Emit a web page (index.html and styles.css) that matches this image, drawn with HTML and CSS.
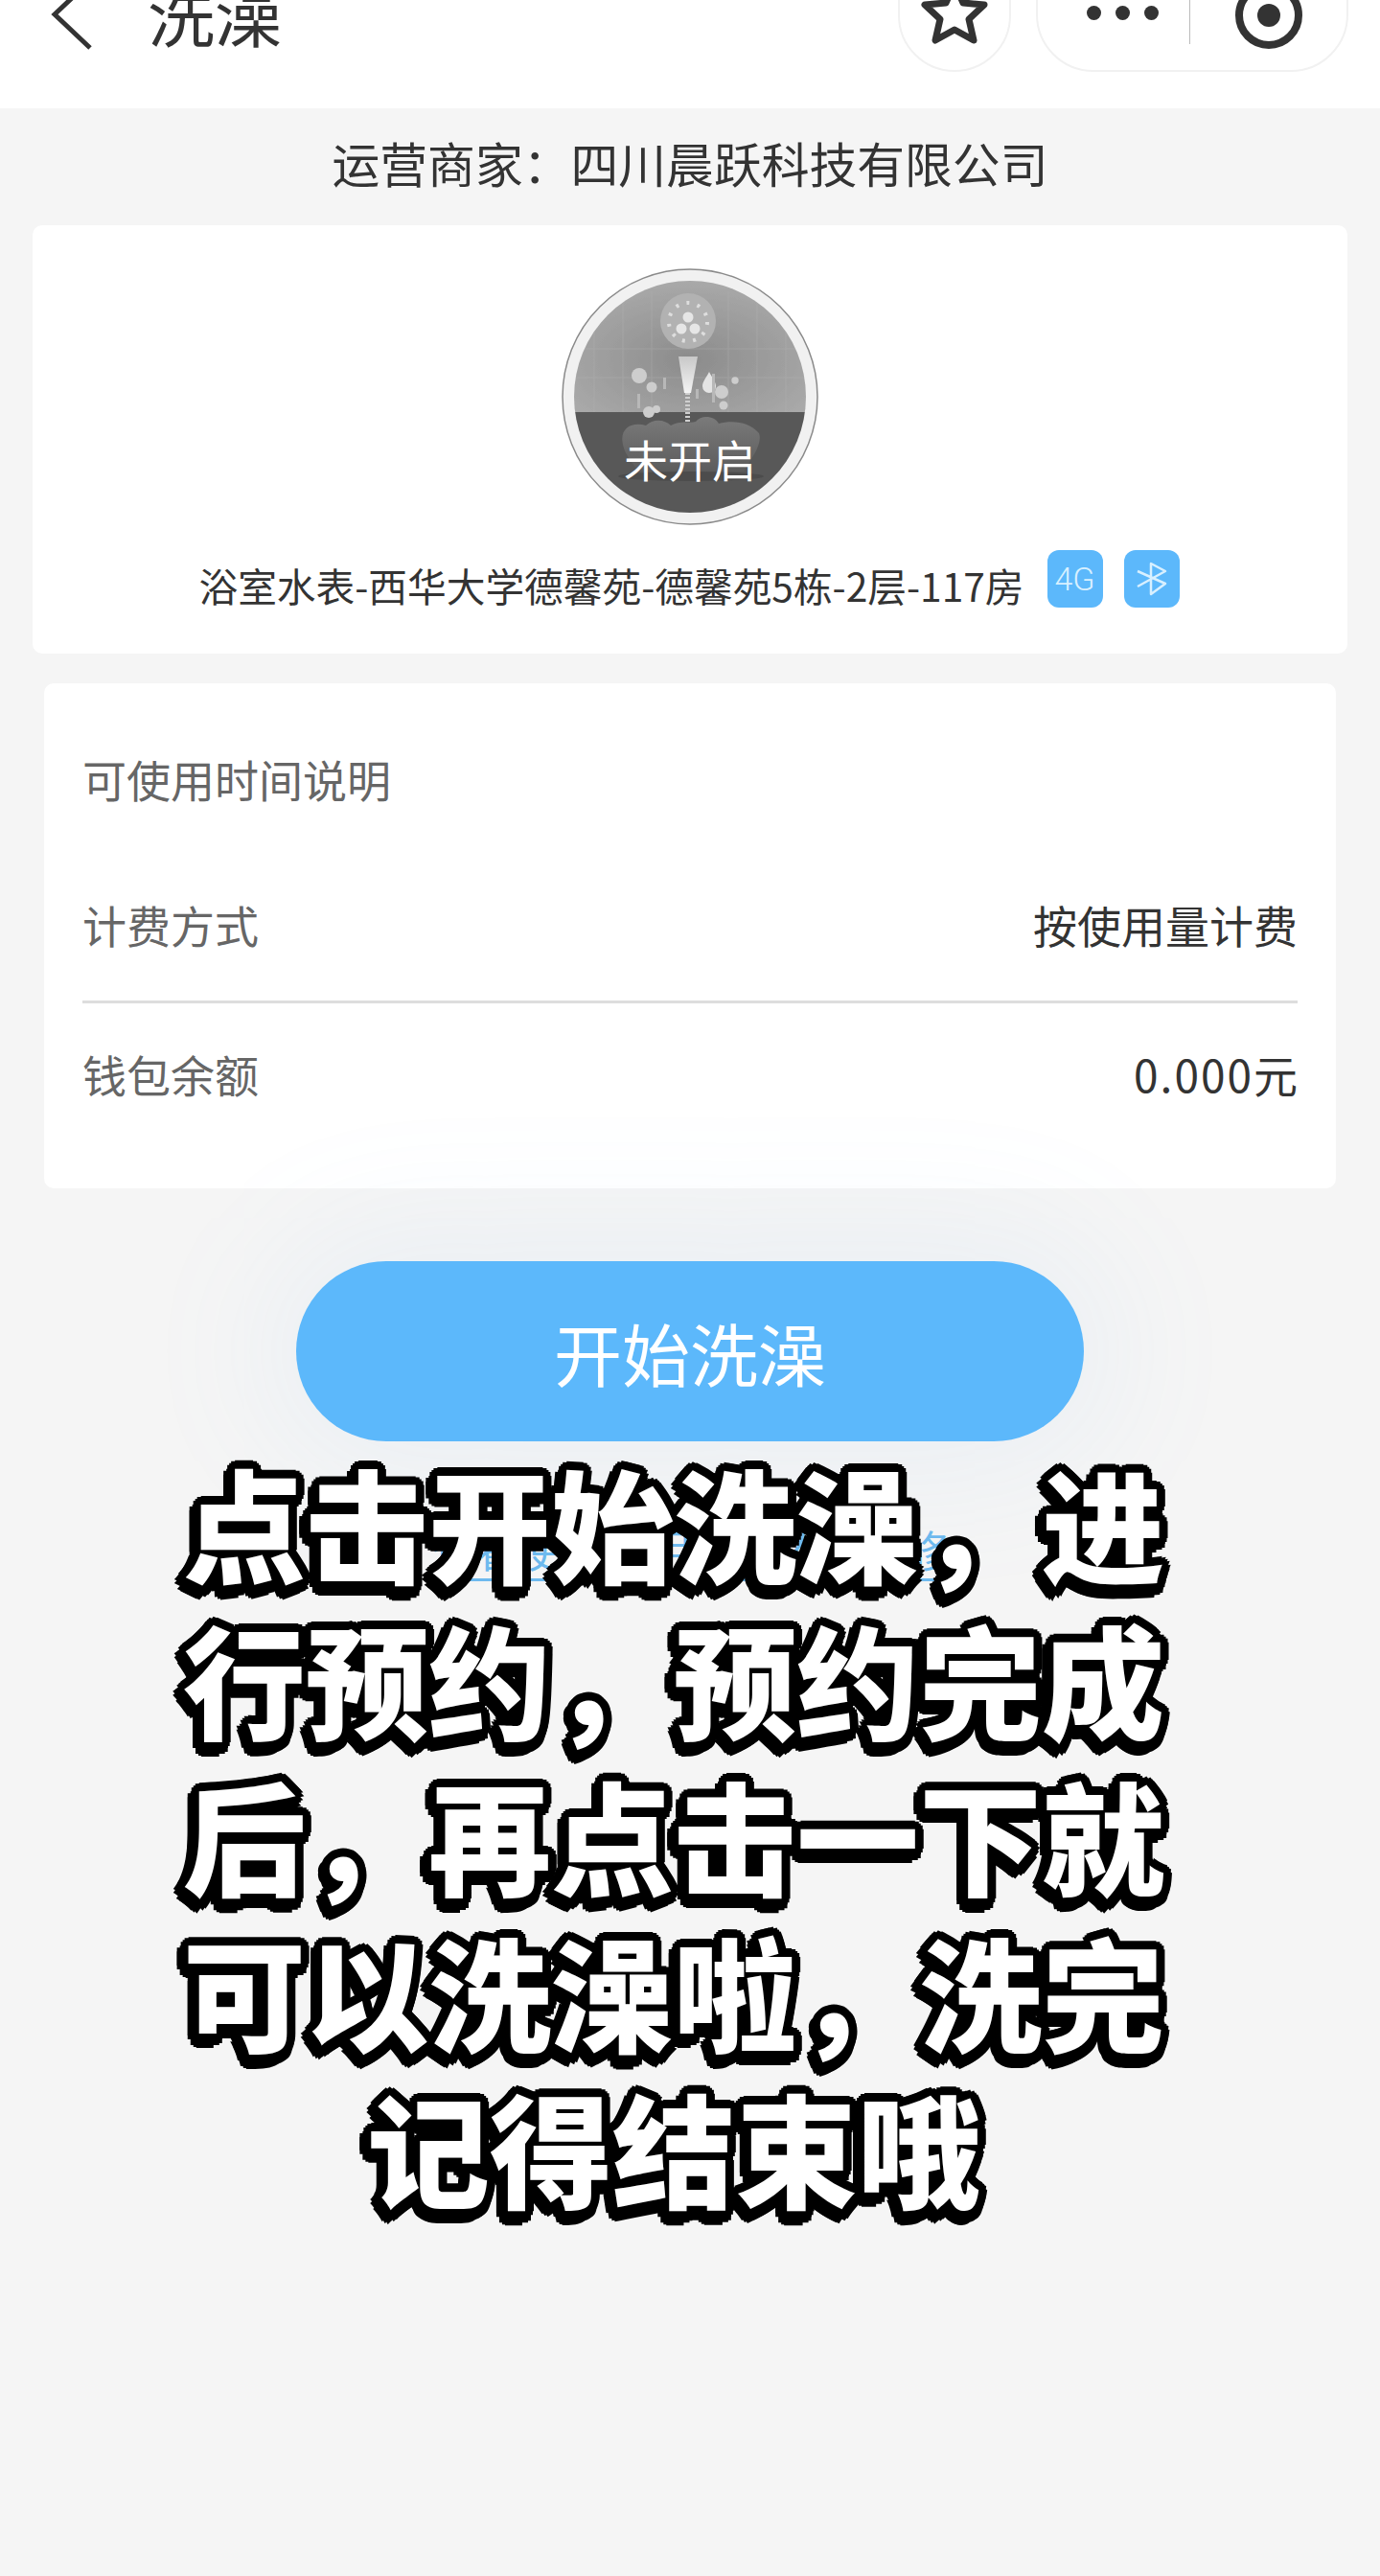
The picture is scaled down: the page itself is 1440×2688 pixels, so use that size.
FILE: index.html
```html
<!DOCTYPE html>
<html lang="zh">
<head>
  <meta charset="UTF-8">
  <meta name="viewport" content="width=device-width, initial-scale=1.0">
  <title>洗澡</title>
  <link rel="stylesheet" href="styles.css">
</head>
<body>
  <div class="page">
    <header class="navbar">
      <svg class="nav-back" width="44" height="76" viewBox="0 0 44 76">
        <path d="M41 3 L4 38 L41 73" fill="none" stroke="#333" stroke-width="5"/>
      </svg>
      <span class="nav-title">洗澡</span>
      <div class="capsule capsule-star">
        <svg width="70" height="70" viewBox="0 0 70 70">
          <path d="M35 4 L44 24 L66 26 L50 41 L55 63 L35 52 L15 63 L20 41 L4 26 L26 24 Z" fill="none" stroke="#333" stroke-width="7" stroke-linejoin="round"/>
        </svg>
      </div>
      <div class="capsule capsule-menu">
        <div class="dots"><i></i><i></i><i></i></div>
        <div class="capsule-line"></div>
        <div class="target"><i></i></div>
      </div>
    </header>

    <div class="merchant">运营商家：四川晨跃科技有限公司</div>

    <section class="card device">
      <div class="disc">
        <svg width="268" height="268" viewBox="-134 -134 268 268">
          <defs>
            <clipPath id="inner"><circle r="121"/></clipPath>
            <linearGradient id="handle" x1="0" y1="0" x2="0" y2="1">
              <stop offset="0" stop-color="#c8c8c8"/>
              <stop offset="1" stop-color="#f4f4f4"/>
            </linearGradient>
            <linearGradient id="foam" x1="0" y1="0" x2="0" y2="1">
              <stop offset="0" stop-color="#7a7a7a"/>
              <stop offset="1" stop-color="#5c5c5c"/>
            </linearGradient>
            <radialGradient id="sky" cx="0.5" cy="0.6" r="0.6">
              <stop offset="0" stop-color="#8c8c8c"/>
              <stop offset="1" stop-color="#a9a9a9"/>
            </radialGradient>
          </defs>
          <circle r="133" fill="#f1f1f1" stroke="#8a8a8a" stroke-width="1.5"/>
          <g clip-path="url(#inner)">
            <rect x="-121" y="-121" width="242" height="137" fill="url(#sky)"/>
            <path d="M-100 -80V16M-70 -100V16M-40 -110V16M40 -110V16M70 -100V16M100 -80V16M-121 -50H121M-121 -20H121" stroke="#b4b4b4" stroke-width="1" opacity=".35"/>
            <rect x="-121" y="16" width="242" height="105" fill="#585858"/>
          </g>
          <!-- shower head -->
          <circle cx="-2" cy="-79" r="29" fill="#b2b2b2"/>
          <circle cx="-2" cy="-78" r="20" fill="none" stroke="#dedede" stroke-width="4" stroke-dasharray="3 8.5"/>
          <circle cx="-2" cy="-83" r="5.5" fill="#e6e6e6"/>
          <circle cx="-9" cy="-71" r="5.5" fill="#e6e6e6"/>
          <circle cx="5" cy="-71" r="5.5" fill="#e6e6e6"/>
          <path d="M-12 -42 H8 L1 -4 H-6 Z" fill="url(#handle)"/>
          <path d="M-2.500 -4 V38" stroke="#cfcfcf" stroke-width="5" stroke-dasharray="2 2"/>
          <!-- bubbles -->
          <g fill="#cdcdcd">
            <circle cx="-53" cy="-22" r="8"/>
            <circle cx="-40" cy="-10" r="5.500"/>
            <circle cx="-43" cy="16" r="6"/>
            <circle cx="-35" cy="13" r="4"/>
            <circle cx="33" cy="-5" r="7"/>
            <circle cx="35" cy="9" r="4.500"/>
            <circle cx="47" cy="-17" r="3.700"/>
            <path d="M20 -26 C23 -20 27 -16 27 -11 A7 7 0 0 1 13 -11 C13 -16 17 -20 20 -26 Z" fill="#e4e4e4"/>
          </g>
          <g fill="#b8b8b8">
            <rect x="-28" y="-20" width="3" height="12"/>
            <rect x="-55" y="-3" width="3" height="15"/>
            <rect x="6" y="-8" width="3" height="10"/>
            <rect x="23" y="-24" width="3" height="30"/>
          </g>
          <!-- foam bowl -->
          <path d="M-70 50 C-74 32 -60 26 -46 30 C-38 22 -26 24 -20 30 C-10 24 0 28 6 26 C12 18 26 20 30 28 C44 24 62 26 72 38 C76 50 64 64 56 78 H-54 C-62 66 -68 60 -70 50 Z" fill="url(#foam)"/>
          <ellipse cx="1" cy="83" rx="76" ry="5" fill="#4c4c4c"/>
        </svg>
        <span class="disc-label">未开启</span>
      </div>
      <div class="device-info">
        <span class="device-name">浴室水表-西华大学德馨苑-德馨苑5栋-2层-117房</span>
        <span class="badge badge-4g">4G</span>
        <span class="badge badge-bt">
          <svg width="58" height="58" viewBox="0 0 58 58">
            <path d="M14 37 L43 21 L28 13 V45 L43 34 L14 21" fill="none" stroke="#d8f0ff" stroke-width="2.500" stroke-linejoin="round"/>
          </svg>
        </span>
      </div>
    </section>

    <section class="card info">
      <div class="row row-time"><span class="row-label">可使用时间说明</span></div>
      <div class="row row-fee">
        <span class="row-label">计费方式</span>
        <span class="row-value">按使用量计费</span>
      </div>
      <div class="row row-wallet">
        <span class="row-label">钱包余额</span>
        <span class="row-value"><span class="digits">0.000</span>元</span>
      </div>
    </section>

    <div class="action">
      <div class="start-btn">开始洗澡</div>
      <span class="help-link">查看使用说明以及故障报修</span>
    </div>

    <div class="caption">点击开始洗澡，进行预约，预约完成后，再点击一下就可以洗澡啦，洗完记得结束哦</div>
  </div>
</body>
</html>
```

FILE: styles.css
```css
* {
  box-sizing: border-box;
}
body {
  margin: 0;
  background-color: #f5f5f5;
  color: #333;
  font-family: "Noto Sans CJK SC", "Noto Sans", sans-serif;
}
.page {
  position: relative;
  height: 2688px;
  overflow: hidden;
}

/* top bar, cut off by the top of the picture */
.navbar {
  display: flex;
  align-items: flex-end;
  height: 113px;
  padding: 0 33px 38px 53px;
  background: white;
  overflow: hidden;
}
.nav-back {
  flex: none;
  margin-bottom: 22px;
}
.nav-title {
  margin-left: 57px;
  margin-bottom: 26px;
  font-size: 70px;
  line-height: 70px;
  color: #333;
}
.capsule {
  flex: none;
  display: flex;
  align-items: center;
  height: 150px;
  border: 2px solid #f1f1f1;
  border-radius: 60px;
  background: white;
}
.capsule-star {
  width: 118px;
  margin-left: auto;
  justify-content: center;
  align-items: flex-end;
  padding-bottom: 24px;
}
.capsule-menu {
  position: relative;
  width: 326px;
  margin-left: 26px;
}
.dots {
  position: absolute;
  right: 196px;
  bottom: 52px;
  display: flex;
  gap: 15px;
}
.dots i {
  width: 15px;
  height: 15px;
  border-radius: 50%;
  background: #333;
}
.capsule-line {
  position: absolute;
  right: 163px;
  bottom: 27px;
  width: 1px;
  height: 60px;
  background: #bbb;
}
.target {
  position: absolute;
  right: 46px;
  bottom: 22px;
  display: flex;
  align-items: center;
  justify-content: center;
  width: 70px;
  height: 70px;
  border: 8px solid #333;
  border-radius: 50%;
}
.target i {
  width: 24px;
  height: 24px;
  border-radius: 50%;
  background: #333;
}

.merchant {
  height: 122px;
  line-height: 112px;
  text-align: center;
  font-size: 49.8px;
  color: #333;
}

.card {
  background: white;
  border-radius: 10px;
}
.device {
  display: flex;
  flex-direction: column;
  align-items: center;
  height: 447px;
  margin: 0 34px;
  padding-top: 45px;
}
.disc {
  position: relative;
  width: 268px;
  height: 268px;
}
.disc svg {
  display: block;
}
.disc-label {
  position: absolute;
  left: 0;
  right: 0;
  top: 168px;
  line-height: 60px;
  text-align: center;
  font-size: 46px;
  color: white;
}
.device-info {
  display: flex;
  align-items: center;
  margin-top: 20px;
  margin-left: -2px;
}
.device-name {
  font-size: 40.7px;
  line-height: 58px;
  color: #333;
  white-space: nowrap;
  margin-top: 14px;
}
.badge {
  display: flex;
  align-items: center;
  justify-content: center;
  width: 58px;
  height: 60px;
  border-radius: 12px;
  background: #5cb8fb;
  color: #d8f0ff;
}
.badge-4g {
  margin-left: 24px;
  font-family: Roboto, sans-serif;
  font-size: 34px;
  font-weight: 300;
}
.badge-bt {
  margin-left: 22px;
}

.info {
  margin: 31px 46px 0;
  padding: 0 40px 90px;
}
.row {
  display: flex;
  justify-content: space-between;
  line-height: 60px;
  font-size: 46px;
}
.row-label {
  color: #666;
}
.row-value {
  color: #333;
}
.digits {
  letter-spacing: 2px;
}
.row-time {
  padding: 69px 0 75px;
}
.row-fee {
  padding: 17px 0 50px;
  border-bottom: 3px solid #ddd;
}
.row-wallet {
  padding-top: 43px;
}

.action {
  display: flex;
  flex-direction: column;
  align-items: center;
}
.start-btn {
  width: 822px;
  height: 188px;
  margin-top: 76px;
  border-radius: 94px;
  background: #5cb8fb;
  box-shadow: 0 0 150px 30px rgba(110, 180, 240, 0.08);
  text-align: center;
  line-height: 188px;
  font-size: 71px;
  color: white;
}
.help-link {
  margin-top: 83px;
  line-height: 60px;
  font-size: 45px;
  color: #6db9ee;
  border-bottom: 3px solid #6db9ee;
}

/* big subtitle over the page */
.caption {
  position: absolute;
  left: 183px;
  top: 1506px;
  width: 1040px;
  text-align: center;
  font-size: 128px;
  font-weight: 900;
  line-height: 163px;
  color: white;
  -webkit-text-stroke: 3px #fff;
  paint-order: stroke fill;
  text-shadow:
    9px 0 0 #000, -9px 0 0 #000, 0 9px 0 #000, 0 -9px 0 #000,
    6px 6px 0 #000, -6px 6px 0 #000, 6px -6px 0 #000, -6px -6px 0 #000,
    8px 4px 0 #000, -8px 4px 0 #000, 8px -4px 0 #000, -8px -4px 0 #000,
    4px 8px 0 #000, -4px 8px 0 #000, 4px -8px 0 #000, -4px -8px 0 #000,
    -12px 6px 0 #000, -3px 15px 0 #000, 6px 6px 0 #000,
    -9px 12px 0 #000, -6px 14px 0 #000, 3px 12px 0 #000,
    -12px 2px 0 #000, 6px 10px 0 #000;
}
```
